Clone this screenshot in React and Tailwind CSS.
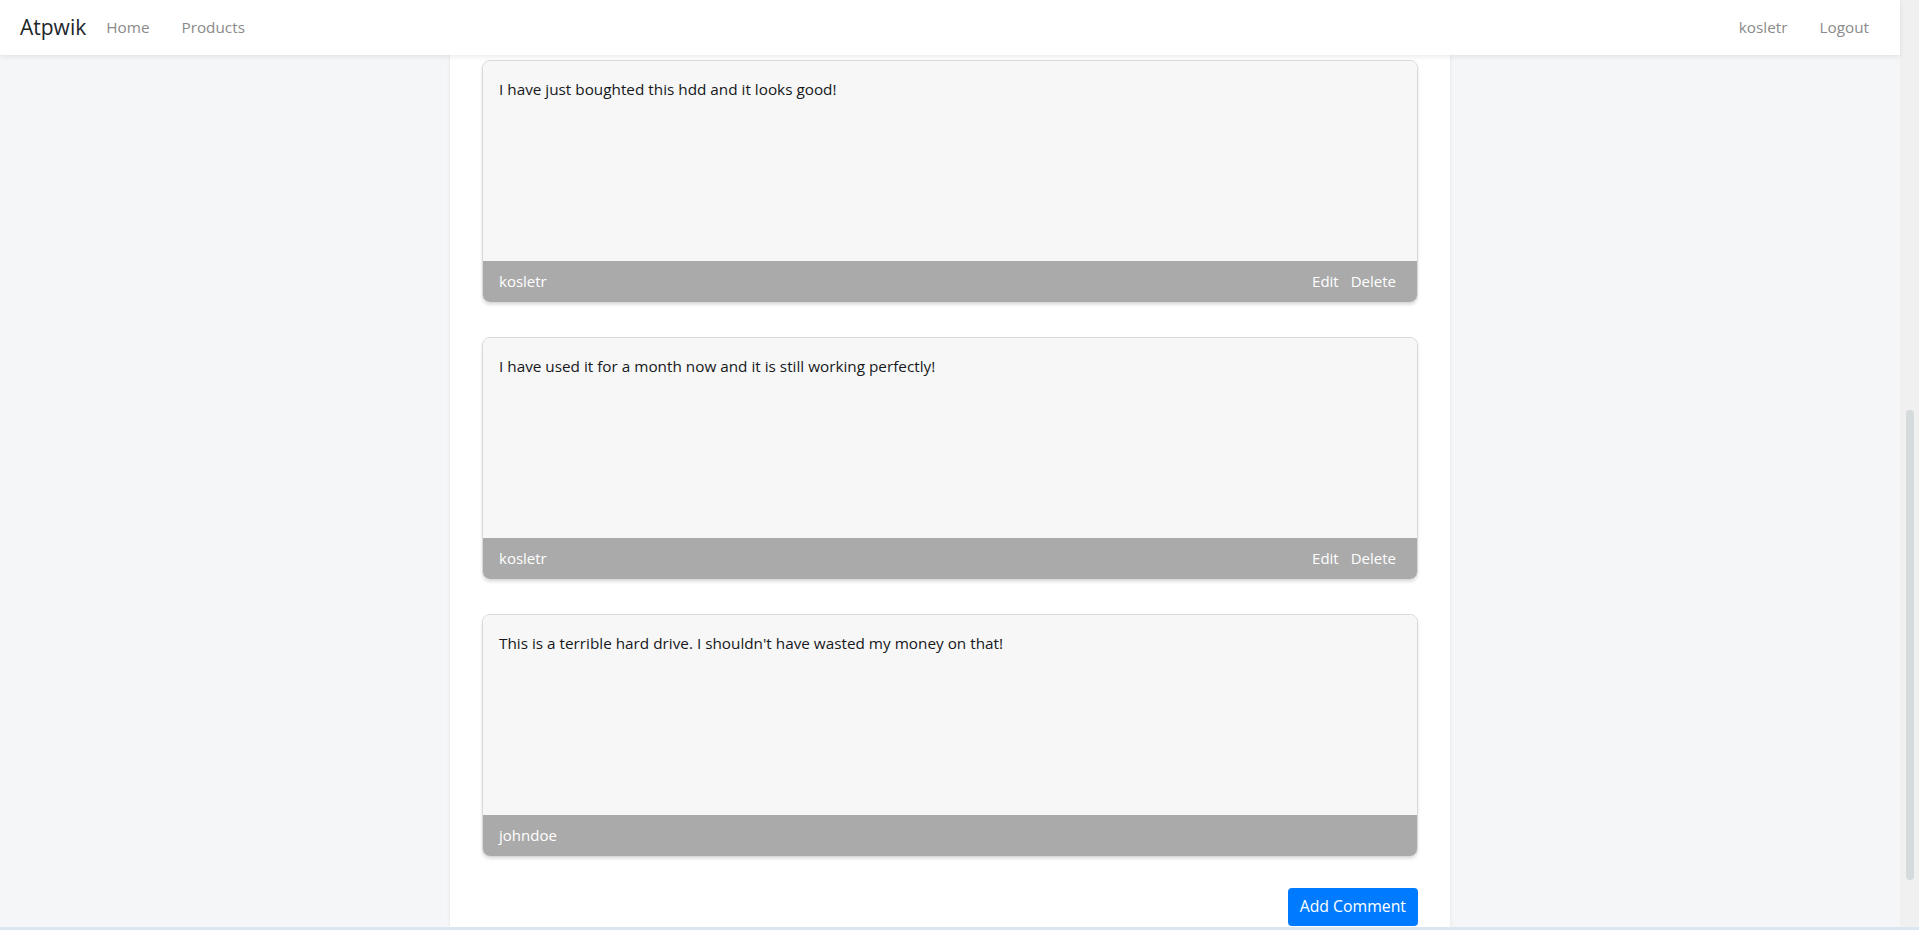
import React from 'react'

const comments = [
  { id: 1, text: 'I have just boughted this hdd and it looks good!', author: 'kosletr', own: true },
  { id: 2, text: 'I have used it for a month now and it is still working perfectly!', author: 'kosletr', own: true },
  { id: 3, text: "This is a terrible hard drive. I shouldn't have wasted my money on that!", author: 'johndoe', own: false },
]

function Navbar() {
  return (
    <nav className="h-[55px] shrink-0 bg-white flex items-center pl-4 pr-[15px] shadow-[0_2px_5px_rgba(0,0,0,0.08)] relative z-10">
      <a href="#" className="ml-1 mr-[4px] text-[21px] text-[#212529] leading-none">Atpwik</a>
      <div className="flex items-center text-[15.3px] text-[#8a8a8a]">
        <a href="#" className="px-4">Home</a>
        <a href="#" className="px-4">Products</a>
      </div>
      <div className="ml-auto flex items-center text-[15.3px] text-[#8a8a8a]">
        <a href="#" className="px-4">kosletr</a>
        <a href="#" className="px-4">Logout</a>
      </div>
    </nav>
  )
}

function CommentCard({ comment }) {
  return (
    <div className="rounded-lg border border-[#d9d9d9] overflow-hidden shadow-[0_2px_3px_rgba(0,0,0,0.12)]">
      <div className="h-[200px] bg-[#f7f7f7] px-4 pt-4 text-[15.3px] leading-6 text-[#16181b]">
        {comment.text}
      </div>
      <div className="h-[41px] bg-[#aaaaaa] flex items-center pl-4 pr-[21px] text-[15px] text-white">
        <span>{comment.author}</span>
        {comment.own && (
          <div className="ml-auto flex gap-[12px]">
            <a href="#">Edit</a>
            <a href="#">Delete</a>
          </div>
        )}
      </div>
    </div>
  )
}

export default function App() {
  return (
    <div className="h-[930px] flex flex-col overflow-hidden bg-[#f5f6f8]" style={{ fontFamily: '"Segoe UI", "Open Sans", "Noto Sans", sans-serif' }}>
      <div className="flex-1 flex min-h-0">
        <div className="flex-1 flex flex-col min-w-0">
          <Navbar />
          <div className="flex-1 min-h-0">
            <div className="mx-auto w-[1000px] h-full bg-white px-8 pt-[5px] shadow-[0_0_4px_rgba(0,0,0,0.08)]">
              <div className="flex flex-col gap-[34px]">
                {comments.map(c => <CommentCard key={c.id} comment={c} />)}
              </div>
              <div className="flex justify-end mt-[31px]">
                <button className="h-[38px] px-3 rounded bg-[#007bff] text-white text-[15.8px]">Add Comment</button>
              </div>
            </div>
          </div>
        </div>
        {/* scrollbar */}
        <div className="w-[19px] shrink-0 bg-[#f0f0f0] flex flex-col pt-[410px] pb-[47px] items-center">
          <div className="w-2 flex-1 rounded-full bg-[#d5dadd]" />
        </div>
      </div>
      <div className="h-[3px] shrink-0 bg-[#dce6f2]" />
    </div>
  )
}
